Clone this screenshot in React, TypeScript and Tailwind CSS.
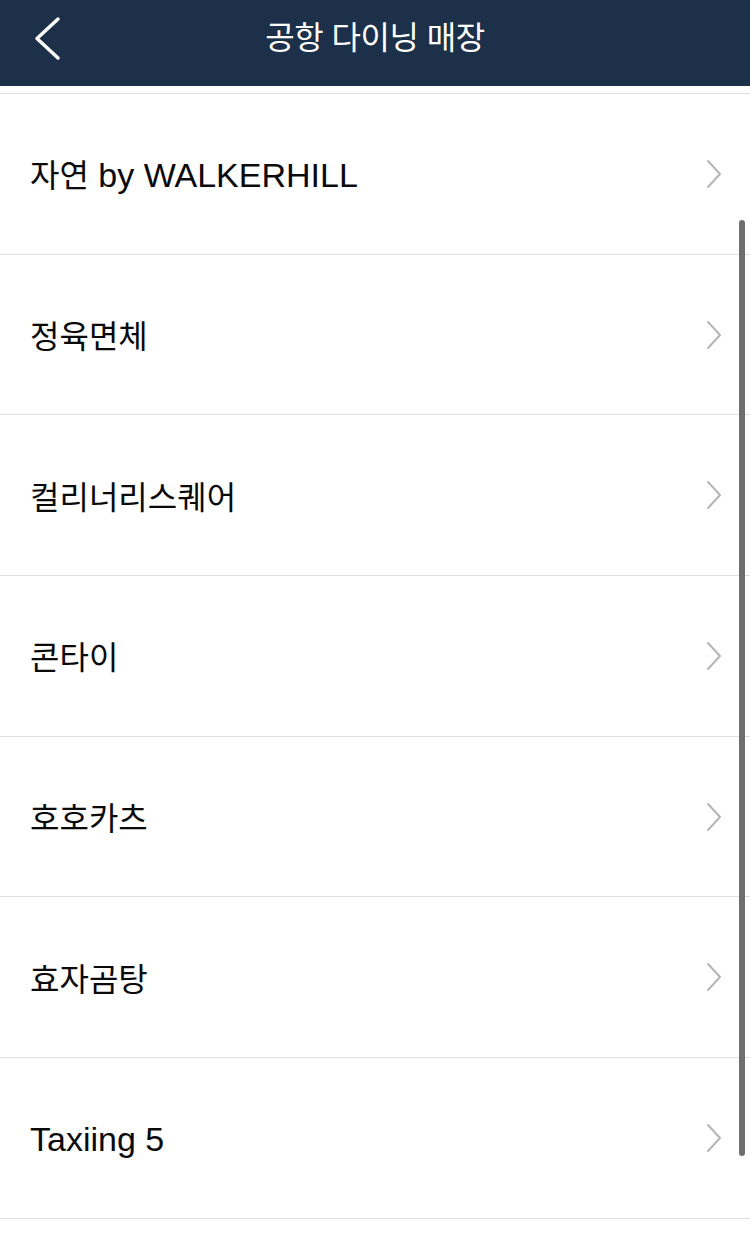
import { ReactNode } from 'react';

interface Store {
  id: number;
  label: ReactNode;
}

const ko = (s: string) => <span className="text-[32px]">{s}</span>;

const stores: Store[] = [
  { id: 1, label: <>{ko('자연')} by WALKERHILL</> },
  { id: 2, label: ko('정육면체') },
  { id: 3, label: ko('컬리너리스퀘어') },
  { id: 4, label: ko('콘타이') },
  { id: 5, label: ko('호호카츠') },
  { id: 6, label: ko('효자곰탕') },
  { id: 7, label: <>Taxiing 5</> },
];

const ChevronRight = () => (
  <svg width="18" height="30" viewBox="0 0 18 30" fill="none">
    <path d="M3 2 L15 15 L3 28" stroke="#b5b5b5" strokeWidth="2" strokeLinecap="round" strokeLinejoin="round" />
  </svg>
);

const BackArrow = () => (
  <svg width="32" height="46" viewBox="0 0 32 46" fill="none">
    <path d="M27 3 L6 22.5 L27 42" stroke="#ffffff" strokeWidth="3.5" strokeLinecap="round" strokeLinejoin="round" />
  </svg>
);

export default function App() {
  return (
    <div
      className="relative w-[750px] h-[1239px] overflow-hidden bg-white"
      style={{ fontFamily: '"Liberation Sans", "Noto Sans CJK KR", sans-serif' }}
    >
      {/* 헤더 */}
      <header className="relative h-[86px] bg-[#1c3049] flex items-center justify-center pb-[10px]">
        <button className="absolute left-[31px] top-[16px]">
          <BackArrow />
        </button>
        <h1 className="text-white text-[32px] leading-none tracking-[-0.5px]">공항 다이닝 매장</h1>
      </header>

      <div className="h-[8px] border-b-[1.5px] border-[#dedede]" />

      {/* 매장 목록 */}
      <ul>
        {stores.map((s) => (
          <li
            key={s.id}
            className="h-[160.7px] border-b-[1.5px] border-[#dedede] flex items-center justify-between pl-[30px] pr-[27px]"
          >
            <span className="text-[34px] leading-none text-[#0a0a0a] pt-[3px]">{s.label}</span>
            <ChevronRight />
          </li>
        ))}
      </ul>

      {/* 스크롤바 */}
      <div className="absolute left-[739px] top-[220px] w-[6px] h-[936px] rounded-full bg-[#6e6e6e]" />
    </div>
  );
}
